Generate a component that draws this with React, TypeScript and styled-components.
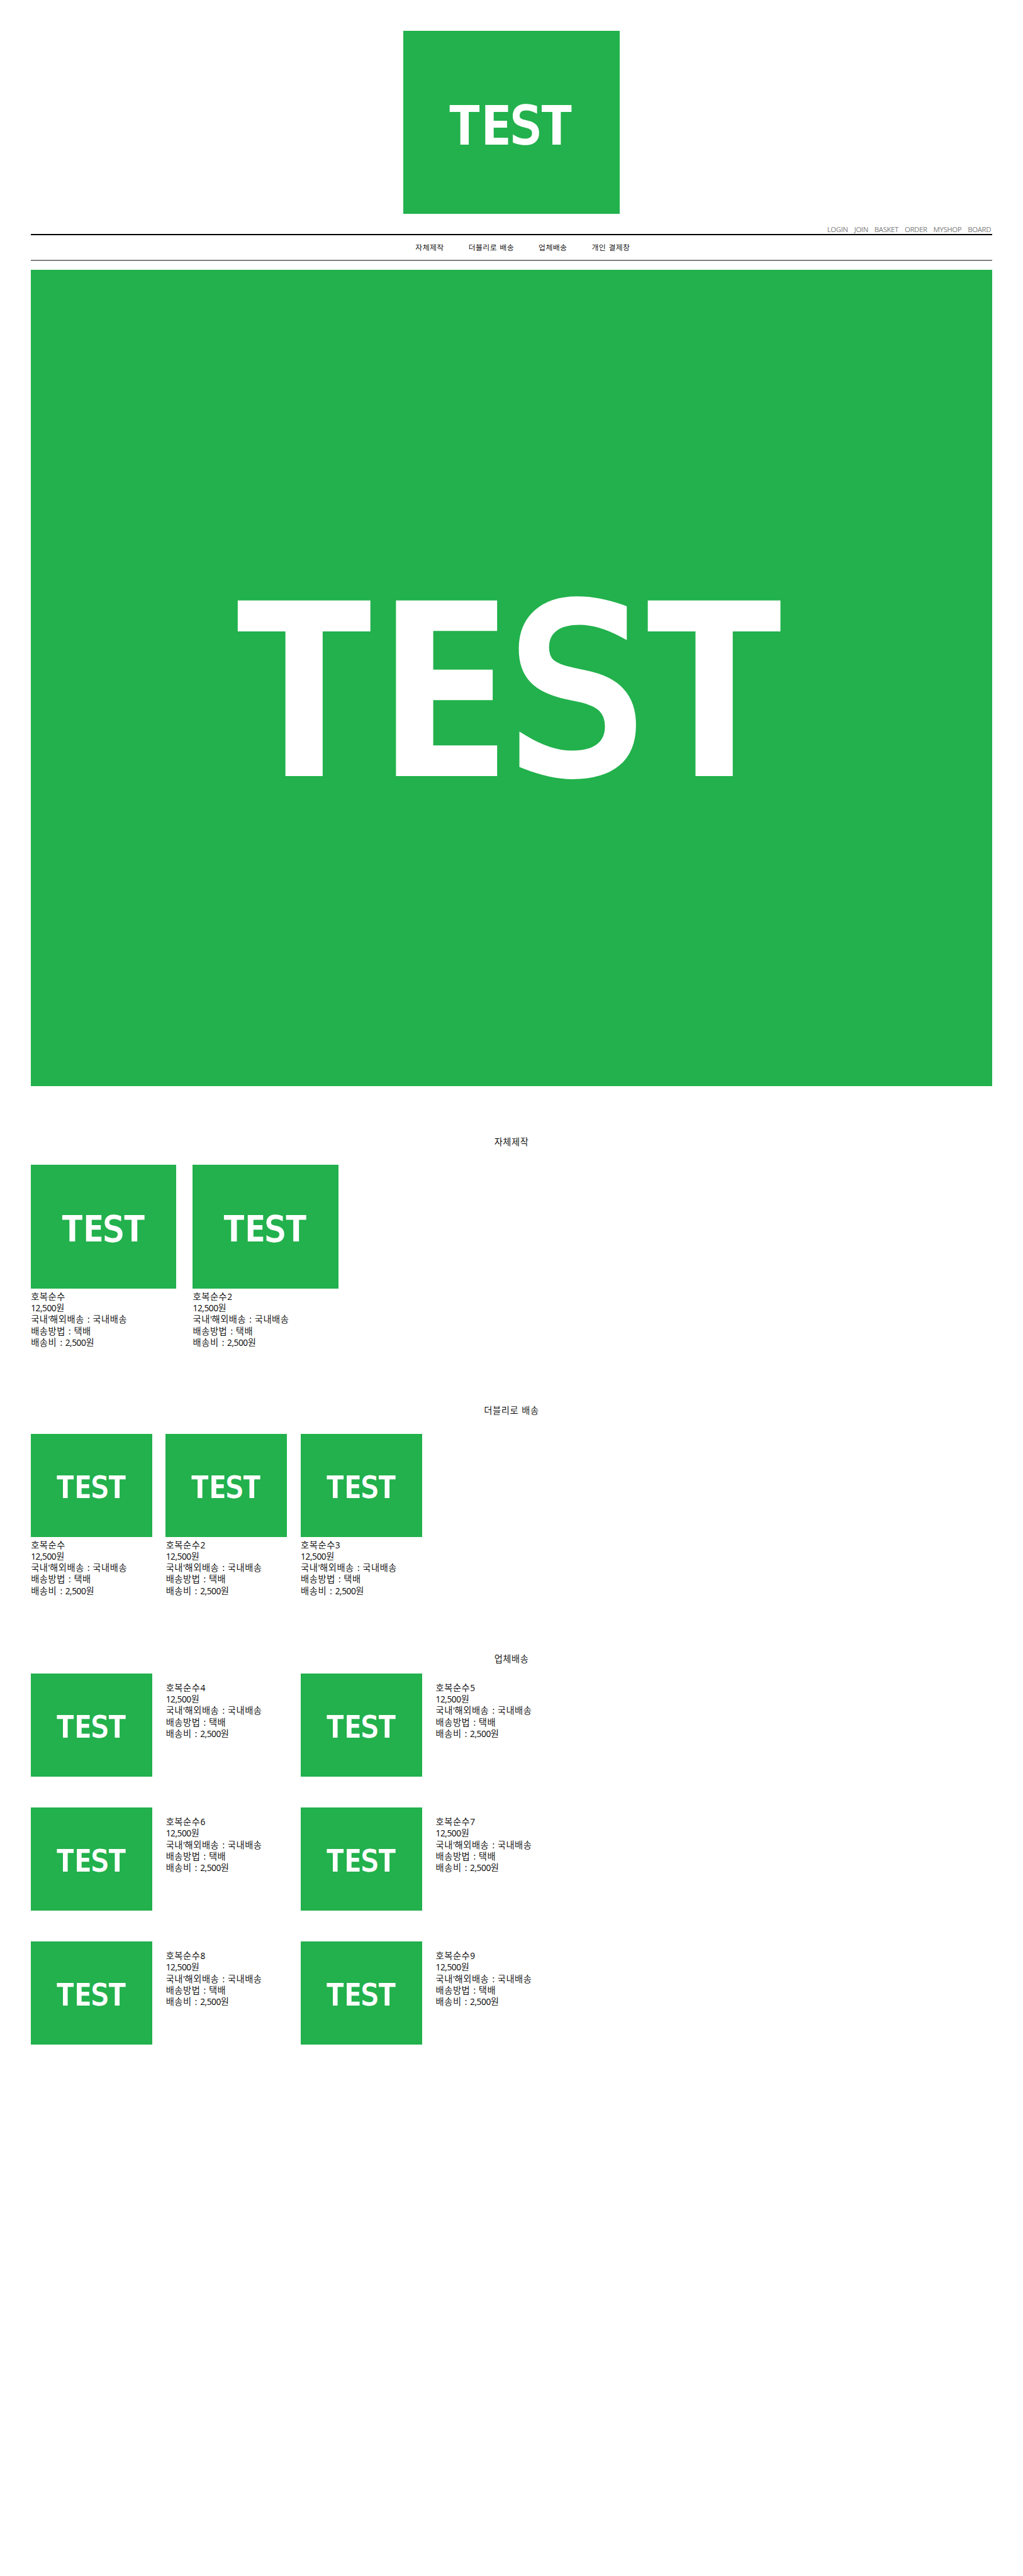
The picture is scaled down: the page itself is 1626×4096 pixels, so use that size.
import React from "react";
import styled, { createGlobalStyle } from "styled-components";

// The layout is specified on a 2843px wide artboard and rendered at 1626px.
const u = (n: number) => `${((n * 1626) / 2843).toFixed(3)}px`;

const GlobalStyle = createGlobalStyle`
  * { box-sizing: border-box; }
  body { margin: 0; background: #fff; color: #000; }
`;

const Page = styled.div`
  width: ${u(2843)};
  height: 4096px;
  padding: ${u(85)} ${u(85)} 0;
  overflow: hidden;
  display: flex;
  flex-direction: column;
  font-family: "Open Sans", "Noto Sans CJK KR", sans-serif;
  font-weight: 350;
`;

const Header = styled.header`
  display: flex;
  flex-direction: column;
  align-items: center;
`;

const Picture = styled.svg<{ $w: number; $h: number }>`
  display: block;
  flex: none;
  width: ${(p) => u(p.$w)};
  height: ${(p) => u(p.$h)};
  background: #22b14c;
`;

const PictureText = styled.text`
  font-family: "Open Sans", "Noto Sans", sans-serif;
  font-weight: 660;
  font-size: 153.5px;
  fill: #fff;
`;

const PictureS = styled.text`
  font-family: "DejaVu Sans", sans-serif;
  font-weight: 400;
  font-size: 142.4px;
  fill: #fff;
  stroke: #fff;
  stroke-width: 6.4px;
`;

const UserMenu = styled.nav`
  align-self: stretch;
  height: ${u(59)};
  padding-right: ${u(4)};
  display: flex;
  justify-content: flex-end;
  align-items: flex-end;
  gap: ${u(17.5)};
  border-bottom: ${u(3.5)} solid #000;
`;

const UserLink = styled.a`
  font-size: ${u(20)};
  line-height: ${u(26.3)};
  letter-spacing: -0.035em;
  color: #808080;
  font-weight: 400;
`;

const MainMenu = styled.nav`
  align-self: stretch;
  height: ${u(72)};
  display: flex;
  padding-left: ${u(1069.6)};
  gap: ${u(68.4)};
  border-bottom: ${u(3.5)} solid #808080;
`;

const MenuLink = styled.a`
  font-size: ${u(20.8)};
  line-height: ${u(66.6)};
  letter-spacing: 0.033em;
  white-space: pre;
`;

const Hero = styled.div`
  margin-top: ${u(24)};
`;

const Section = styled.section<{ $top: number }>`
  margin-top: ${(p) => u(p.$top)};
`;

const Title = styled.h2<{ $gap: number }>`
  margin: 0 0 ${(p) => u(p.$gap)};
  font-size: ${u(25)};
  line-height: ${u(32)};
  letter-spacing: 0.038em;
  font-weight: 350;
  text-align: center;
`;

const Row = styled.div<{ $gap: number }>`
  display: flex;
  gap: ${(p) => u(p.$gap)};
`;

const Grid = styled.div`
  display: grid;
  grid-template-columns: ${u(750)} ${u(750)};
  row-gap: ${u(86.2)};
`;

const SideCard = styled.article`
  display: flex;
  gap: ${u(37.3)};
`;

const Details = styled.ul<{ $top: number }>`
  list-style: none;
  margin: 0;
  padding: ${(p) => u(p.$top)} 0 0 ${u(1)};
  font-size: ${u(25)};
  line-height: ${u(31.85)};
  letter-spacing: 0.038em;
`;

const Line = styled.li`
  height: ${u(31.85)};
  white-space: pre;
`;

const Latin = styled.span`
  font-size: 0.96em;
  font-weight: 400;
  letter-spacing: -0.033em;
  word-spacing: 0.15em;
`;

function Mixed({ text }: { text: string }) {
  return (
    <>
      {text.split(/([\x20-\x7e]+)/).map((part, i) =>
        i % 2 ? <Latin key={i}>{part}</Latin> : part
      )}
    </>
  );
}

function TestPicture({ w, h }: { w: number; h: number }) {
  return (
    <Picture $w={w} $h={h} viewBox="0 0 600 509.4" preserveAspectRatio="none">
      <PictureText x="126 214" y="316">TE</PictureText>
      <PictureS transform="translate(298.7 312.7) scale(0.92 1)">S</PictureS>
      <PictureText x="381.8" y="316">T</PictureText>
    </Picture>
  );
}

function ProductDetails({ name, top }: { name: string; top: number }) {
  const lines = [name, "12,500원", "국내'해외배송 : 국내배송", "배송방법 : 택배", "배송비 : 2,500원"];
  return (
    <Details $top={top}>
      {lines.map((line) => (
        <Line key={line}>
          <Mixed text={line} />
        </Line>
      ))}
    </Details>
  );
}

const userLinks = ["LOGIN", "JOIN", "BASKET", "ORDER", "MYSHOP", "BOARD"];
const menuLinks = ["자체제작", "더블리로 배송", "업체배송", "개인 결제창"];
const ownProducts = ["호복순수", "호복순수2"];
const doubleProducts = ["호복순수", "호복순수2", "호복순수3"];
const vendorProducts = ["호복순수4", "호복순수5", "호복순수6", "호복순수7", "호복순수8", "호복순수9"];

export default function App() {
  return (
    <>
      <GlobalStyle />
      <Page>
        <Header>
          <TestPicture w={600} h={510} />
          <UserMenu>
            {userLinks.map((label) => (
              <UserLink key={label}>{label}</UserLink>
            ))}
          </UserMenu>
          <MainMenu>
            {menuLinks.map((label) => (
              <MenuLink key={label}>
                <Mixed text={label} />
              </MenuLink>
            ))}
          </MainMenu>
        </Header>
        <Hero>
          <TestPicture w={2673} h={2269} />
        </Hero>
        <Section $top={140.2}>
          <Title $gap={47.8}>
            <Mixed text="자체제작" />
          </Title>
          <Row $gap={45}>
            {ownProducts.map((name) => (
              <article key={name}>
                <TestPicture w={405} h={344} />
                <ProductDetails name={name} top={6.8} />
              </article>
            ))}
          </Row>
        </Section>
        <Section $top={158}>
          <Title $gap={47.8}>
            <Mixed text="더블리로 배송" />
          </Title>
          <Row $gap={37.3}>
            {doubleProducts.map((name) => (
              <article key={name}>
                <TestPicture w={337.7} h={286.5} />
                <ProductDetails name={name} top={6.8} />
              </article>
            ))}
          </Row>
        </Section>
        <Section $top={157.6}>
          <Title $gap={23.8}>
            <Mixed text="업체배송" />
          </Title>
          <Grid>
            {vendorProducts.map((name) => (
              <SideCard key={name}>
                <TestPicture w={337.7} h={286.5} />
                <ProductDetails name={name} top={24.8} />
              </SideCard>
            ))}
          </Grid>
        </Section>
      </Page>
    </>
  );
}
